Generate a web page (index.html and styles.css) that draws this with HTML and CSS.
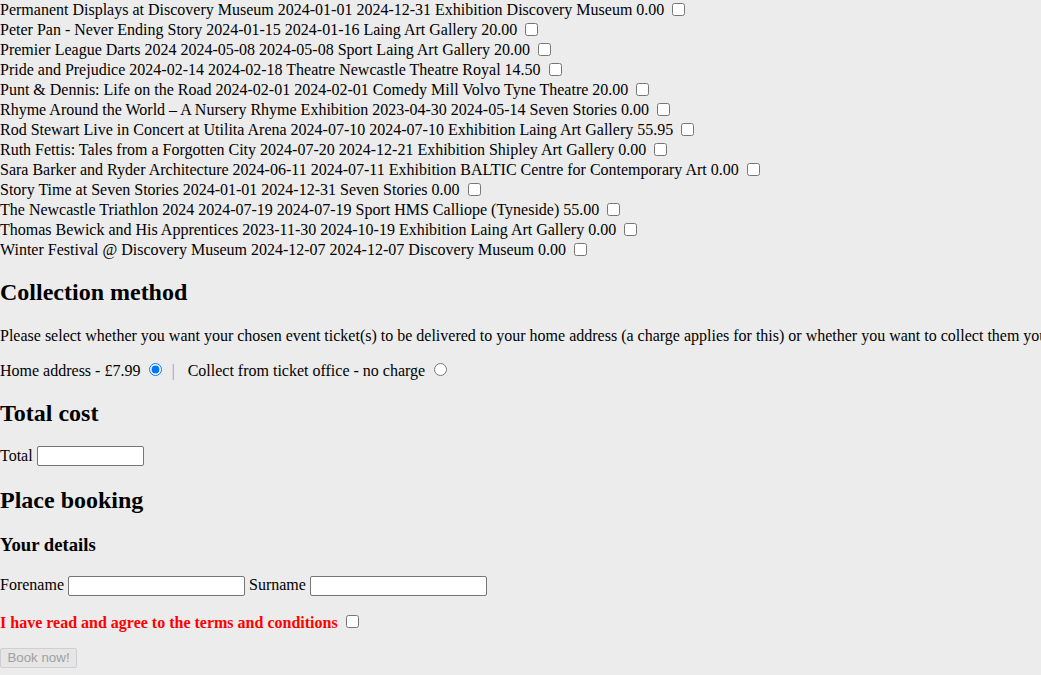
FILE: index.html
```html
<!DOCTYPE html>
<html lang="en">
<head>
<meta charset="utf-8">
<title>Book events</title>
<link rel="stylesheet" href="styles.css">
</head>
<body>
<form class="booking">
  <div class="events">
    <div class="event">Permanent Displays at Discovery Museum 2024-01-01 2024-12-31 Exhibition Discovery Museum 0.00 <input type="checkbox"></div>
    <div class="event">Peter Pan - Never Ending Story 2024-01-15 2024-01-16 Laing Art Gallery 20.00 <input type="checkbox"></div>
    <div class="event">Premier League Darts 2024 2024-05-08 2024-05-08 Sport Laing Art Gallery 20.00 <input type="checkbox"></div>
    <div class="event">Pride and Prejudice 2024-02-14 2024-02-18 Theatre Newcastle Theatre Royal 14.50 <input type="checkbox"></div>
    <div class="event">Punt &amp; Dennis: Life on the Road 2024-02-01 2024-02-01 Comedy Mill Volvo Tyne Theatre 20.00 <input type="checkbox"></div>
    <div class="event">Rhyme Around the World – A Nursery Rhyme Exhibition 2023-04-30 2024-05-14 Seven Stories 0.00 <input type="checkbox"></div>
    <div class="event">Rod Stewart Live in Concert at Utilita Arena 2024-07-10 2024-07-10 Exhibition Laing Art Gallery 55.95 <input type="checkbox"></div>
    <div class="event">Ruth Fettis: Tales from a Forgotten City 2024-07-20 2024-12-21 Exhibition Shipley Art Gallery 0.00 <input type="checkbox"></div>
    <div class="event">Sara Barker and Ryder Architecture 2024-06-11 2024-07-11 Exhibition BALTIC Centre for Contemporary Art 0.00 <input type="checkbox"></div>
    <div class="event">Story Time at Seven Stories 2024-01-01 2024-12-31 Seven Stories 0.00 <input type="checkbox"></div>
    <div class="event">The Newcastle Triathlon 2024 2024-07-19 2024-07-19 Sport HMS Calliope (Tyneside) 55.00 <input type="checkbox"></div>
    <div class="event">Thomas Bewick and His Apprentices 2023-11-30 2024-10-19 Exhibition Laing Art Gallery 0.00 <input type="checkbox"></div>
    <div class="event">Winter Festival @ Discovery Museum 2024-12-07 2024-12-07 Discovery Museum 0.00 <input type="checkbox"></div>
  </div>

  <section class="collection">
    <h2 class="section-title collection-title">Collection method</h2>
    <p class="intro">Please select whether you want your chosen event ticket(s) to be delivered to your home address (a charge applies for this) or whether you want to collect them yourself on the day of the event.</p>
    <div class="delivery">
      <label class="opt">Home address - £7.99 <input type="radio" name="deliveryType" value="home" checked></label><span class="sep">|</span><label class="opt">Collect from ticket office - no charge <input type="radio" name="deliveryType" value="collect"></label>
    </div>
  </section>

  <section class="total">
    <h2 class="section-title total-title">Total cost</h2>
    <label class="total-row">Total <input type="text" class="total-input" name="total" readonly></label>
  </section>

  <section class="place">
    <h2 class="section-title">Place booking</h2>
    <h3 class="sub-title">Your details</h3>
    <div class="names">
      <label>Forename <input type="text" class="name-input" name="forename"></label>
      <label>Surname <input type="text" class="name-input" name="surname"></label>
    </div>
    <p class="terms"><label class="terms-label">I have read and agree to the terms and conditions</label> <input type="checkbox" name="termsChkbx"></p>
    <p class="submit"><input type="submit" class="book-btn" value="Book now!" disabled></p>
  </section>
</form>
</body>
</html>
```
FILE: styles.css
```css
html, body {
  background: #ececec;
}
body {
  margin: 0;
  font-family: "Liberation Serif", "Times New Roman", serif;
  font-size: 16px;
  color: #000;
  white-space: nowrap;
  overflow: hidden;
}
.booking {
  margin: 0;
}
.event {
  height: 20px;
  line-height: 20px;
}
.event input[type="checkbox"] {
  margin: 3px 3px 3px 4px;
  vertical-align: -1px;
}
.section-title {
  font-size: 24px;
  font-weight: bold;
  margin: 20px 0;
  line-height: 28px;
}
.collection-title {
  margin: 18px 0 21px;
}
.total-title {
  margin: 18px 0 19px;
}
.intro {
  margin: 16px 0 15px;
}
.delivery {
  margin: 0;
  line-height: 20px;
}
.opt input[type="radio"] {
  margin: 3px 3px 0 5px;
}
.sep {
  color: #6aa6e0;
  margin: 0 13px 0 6px;
}
.total-row {
  display: inline-block;
  margin-top: 0;
}
.total-input,
.name-input {
  box-sizing: border-box;
  height: 20px;
  border: 1px solid #767676;
  border-radius: 2px;
  background: #fff;
  padding: 1px 2px;
  font-family: "Liberation Sans", Arial, sans-serif;
  font-size: 13.33px;
  vertical-align: baseline;
}
.total-input {
  width: 107px;
}
.name-input {
  width: 177px;
}
.sub-title {
  font-size: 18.72px;
  font-weight: bold;
  margin: 19.72px 0 19.72px;
}
.names {
  margin: 0;
}
.terms {
  margin: 16px 0;
}
.terms-label {
  color: #ff0000;
  font-weight: bold;
}
.submit {
  margin: 0;
}
.book-btn {
  box-sizing: border-box;
  height: 20px;
  width: 77px;
  padding: 0 6px;
  font-family: "Liberation Sans", Arial, sans-serif;
  font-size: 13.33px;
  color: #a0a0a0;
  background: #e6e6e6;
  border: 1px solid #cfcfcf;
  border-radius: 2px;
}
```
